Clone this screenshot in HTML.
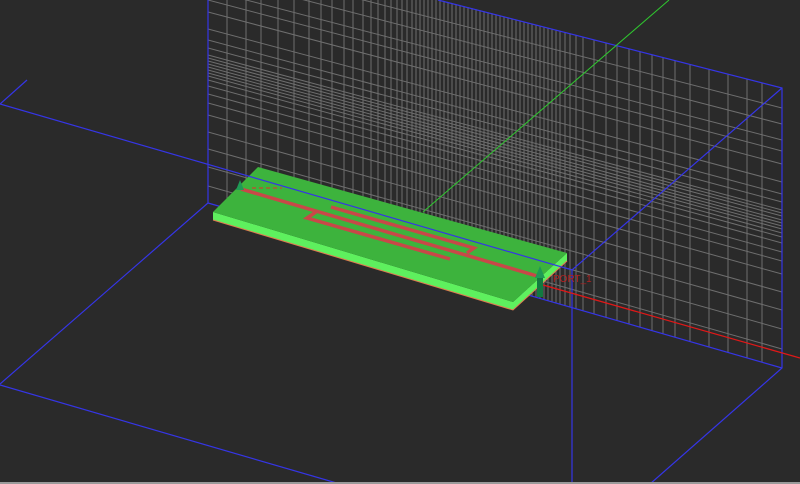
<!DOCTYPE html>
<html><head><meta charset="utf-8"><style>
html,body{margin:0;padding:0;background:#2a2a2a;width:800px;height:484px;overflow:hidden}
svg{display:block}
</style></head><body>
<svg width="800" height="484" viewBox="0 0 800 484" xmlns="http://www.w3.org/2000/svg">
<defs>
<clipPath id="pl"><polygon points="208,-60 782,88 782,368 208,203"/></clipPath>
</defs>
<rect width="800" height="484" fill="#2a2a2a"/>
<g clip-path="url(#pl)" stroke="#6e6e6e" stroke-width="1" fill="none">
<path d="M208 0V400M227 0V400M246 0V400M261 0V400M278 0V400M294 0V400M309 0V400M321 0V400M332 0V400M344 0V400M353 0V400M363 0V400M371 0V400M378 0V400M385 0V400M391 0V400M397 0V400M402 0V400M407 0V400M412 0V400M416 0V400M420 0V400M424 0V400M428 0V400M432 0V400M436 0V400M440 0V400M444 0V400M448 0V400M452 0V400M456 0V400M460 0V400M464 0V400M468 0V400M472 0V400M476 0V400M480 0V400M484 0V400M488 0V400M492 0V400M496 0V400M500 0V400M504 0V400M508 0V400M512 0V400M516 0V400M520 0V400M524 0V400M528 0V400M532 0V400M536 0V400M540 0V400M544 0V400M548 0V400M552 0V400M556 0V400M560 0V400M565 0V400M570 0V400M576 0V400M583 0V400M594 0V400M606 0V400M617 0V400M629 0V400M640 0V400M652 0V400M663 0V400M675 0V400M690 0V400M709 0V400M728 0V400M747 0V400M762 0V400"/>
<path d="M208 -40L782 108M208 -25L782 124M208 -10L782 140M208 0L782 151M208 12L782 164M208 29L782 182M208 40L782 194M208 48L782 202M208 55L782 210M208 58L782 213M208 61L782 216M208 64L782 220M208 67L782 223M208 70L782 226M208 73L782 229M208 76L782 233M208 80L782 237M208 86L782 243M208 94L782 252M208 103L782 261M208 115L782 274M208 132L782 292M208 149L782 310M208 167L782 329M208 186L782 349"/>
</g>
<g stroke="#3535e6" stroke-width="1.2" fill="none">
<path d="M438 0L782 88V368L650 484"/>
<path d="M208 0V203L0 384"/>
<path d="M208 203L782 368"/>
<path d="M572 270V484"/>
<path d="M0 385L340 484"/>
<path d="M0 104L27 80"/>
</g>
<line x1="423" y1="212" x2="669" y2="0" stroke="#2fc82f" stroke-width="1"/>
<line x1="543" y1="285" x2="800" y2="358" stroke="#e01818" stroke-width="1.3"/>
<!-- board -->
<polygon points="213,212 513,302 513,310 213,220" fill="#5ef05e"/>
<polygon points="513,302 567,253 567,261 513,310" fill="#5ef05e"/>
<polyline points="213,220 513,310 567,261" fill="none" stroke="#e07a50" stroke-width="1"/>
<polygon points="258,167 567,253 513,302 213,212" fill="#3db33d"/>
<g stroke="#c84848" stroke-width="3.5" fill="none" stroke-linecap="butt">
<path d="M241 189L537 276"/>
<path d="M331 207L474 248L467 253"/>
<path d="M316 212L307 218L450 259"/>
</g>
<path d="M0 104L572 270L782 88" stroke="#3535e6" stroke-width="1.2" fill="none"/>
<path d="M252 188H282" stroke="#b05a30" stroke-width="1.5" stroke-dasharray="4,3"/>
<polygon points="240,180 244,190 236,190" fill="#1f9a55"/>
<polygon points="540,266 545,278 535,278" fill="#1f9a55"/>
<rect x="537" y="278" width="6" height="19" fill="#127a40"/>
<text x="553" y="282" font-family="Liberation Sans, sans-serif" font-size="10" fill="#b02020">PORT_1</text>
<rect x="0" y="482" width="800" height="2" fill="#9a9a9a"/>
</svg>
</body></html>
